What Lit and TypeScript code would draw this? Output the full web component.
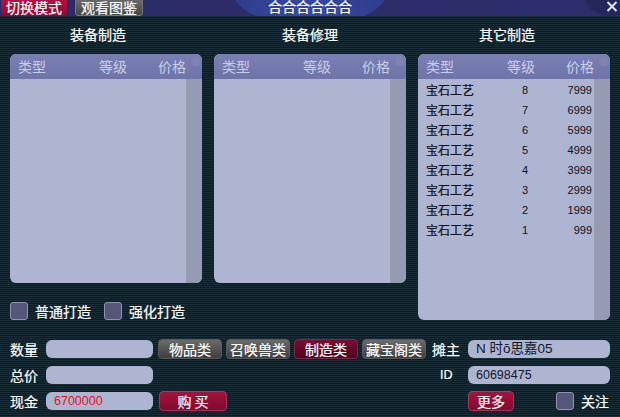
import { LitElement, html, css } from "lit";
import { customElement } from "lit/decorators.js";

const ROWS: [string, string][] = [
  ["8", "7999"], ["7", "6999"], ["6", "5999"], ["5", "4999"],
  ["4", "3999"], ["3", "2999"], ["2", "1999"], ["1", "999"],
];

@customElement("app-root")
export class AppRoot extends LitElement {
  static styles = css`
    :host {
      display: block;
      width: 620px;
      height: 417px;
      overflow: hidden;
      position: relative;
      font-family: "Noto Sans CJK SC", "Liberation Sans", sans-serif;
      color: #fff;
      background: repeating-linear-gradient(180deg, #1a2d36 0 1px, #0e1c22 1px 2px);
    }
    .top { height: 16px; background: linear-gradient(90deg, #2a2b66, #2d2f6c); display: flex; position: relative; overflow: hidden; }
    .topbtn {
      box-sizing: border-box; height: 16px; border-radius: 0 0 4px 4px;
      font-size: 14px; line-height: 15px; text-align: center; width: 66px; margin-left: 1px;
      -webkit-text-stroke: 0.2px #fff;
    }
    .crimson { background: linear-gradient(180deg, #b5103f, #8c0a35); }
    .gray { background: linear-gradient(180deg, #6a6a6a, #454545); width: 68px; margin-left: 8px; border: 1px solid #77777a; border-top: 0; line-height: 15px; }
    .blob {
      position: absolute; left: 232px; top: -46px; width: 156px; height: 72px;
      border-radius: 50%; background: radial-gradient(ellipse at 50% 100%, #3a4ba0, #2c3a86 85%);
      font-size: 14px; text-align: center;
    }
    .blob span { position: absolute; left: 0; right: 0; top: 46px; line-height: 13px; -webkit-text-stroke: 0.2px #fff; }
    .corner { position: absolute; left: 586px; top: -16px; width: 50px; height: 32px; border-radius: 50%; background: radial-gradient(ellipse at 50% 50%, #23275a 60%, #2d2f6c 100%); }
    .close { position: absolute; left: 605px; top: 0; width: 14px; height: 14px; }

    .main { display: grid; grid-template-columns: 192px 192px 192px; column-gap: 12px; padding: 9px 0 0 10px; }
    .col { display: flex; flex-direction: column; }
    .title { box-sizing: border-box; height: 18px; line-height: 18px; margin-bottom: 11px; font-size: 14px; text-align: center; -webkit-text-stroke: 0.2px #fff; }
    .t1 { padding-right: 16px; }
    .t3 { padding-right: 14px; }
    .panel { position: relative; width: 192px; border-radius: 6px; overflow: hidden; background: #adb5d0; display: flex; flex-direction: column; }
    .short { height: 229px; }
    .tall { height: 266px; }
    .head {
      height: 25px; flex: none; background: linear-gradient(180deg, #7b80b4, #6f74a8); color: #c9cdea; font-size: 14px; position: relative; z-index: 1;
      display: grid; grid-template-columns: 81px 59px 1fr; padding-left: 8px; line-height: 25px; box-sizing: border-box;
    }
    .bar { position: absolute; right: 0; top: 25px; bottom: 0; width: 16px; background: #959bb2; }
    .knob { position: absolute; right: 1px; top: 2px; width: 10px; height: 10px; border-radius: 50%; background: #7f83ad; z-index: 2; }
    .body { padding: 1px 0 0 8px; color: #0e1020; position: relative; z-index: 1; }
    .row { display: grid; grid-template-columns: 83px 32px 51px; height: 20px; line-height: 20px; font-size: 12px; }
    .row .lvl { text-align: center; font-family: "Liberation Sans", sans-serif; font-size: 11px; }
    .row .price { text-align: right; font-family: "Liberation Sans", sans-serif; font-size: 11px; }
    .row .name { font-size: 12px; -webkit-text-stroke: 0.2px #0e1020; }

    .checks { display: flex; align-items: center; margin-top: 19px; height: 18px; font-size: 14px; grid-column: 1 / span 2; }
    .box { width: 18px; height: 18px; box-sizing: border-box; border: 1px solid #8f93ad; border-radius: 3px; background: #56557a; flex: none; }
    .checks .lbl { margin-left: 7px; width: 69px; -webkit-text-stroke: 0.2px #fff; }
    .left2 { grid-column: 1 / span 2; display: grid; grid-template-columns: 192px 192px; column-gap: 12px; }

    .bottom {
      position: absolute; left: 10px; top: 339px; width: 600px;
      display: grid; grid-template-columns: 36px 107px 5px 64px 4px 64px 4px 64px 4px 64px 6px 36px 142px;
      grid-template-rows: 20px 6px 20px 6px 20px; align-items: center; font-size: 14px;
    }
    .lab { line-height: 20px; -webkit-text-stroke: 0.2px #fff; }
    .inp { box-sizing: border-box; height: 18px; background: #adb5d0; border-radius: 6px; font-size: 12.5px; line-height: 18px; padding-left: 8px; color: #12162e; font-family: "Liberation Sans", "Noto Sans CJK SC", sans-serif; white-space: nowrap; }
    .owner { font-size: 13.5px; }
    .red { color: #e3102c; }
    .btn { height: 20px; box-sizing: border-box; border-radius: 4px; line-height: 18px; text-align: center; font-size: 14px; border: 1px solid #5a5a5a; background: linear-gradient(180deg, #6b6b6b, #3e3e3e); -webkit-text-stroke: 0.2px #fff; }
    .btn.on { background: linear-gradient(180deg, #7c0b33, #4e0620); border-color: #7a2a48; }
    .btn.buy { background: linear-gradient(180deg, #a6123f, #7e0b30); border-color: #a03a58; width: 68px; margin-left: 1px; }
    .r1 { grid-row: 1; } .r2 { grid-row: 3; } .r3 { grid-row: 5; }
    .extra { grid-column: 13; display: flex; align-items: center; }
    .more { width: 46px; background: linear-gradient(180deg, #a6123f, #7e0b30); border-color: #a03a58; }
    .extra .box { margin-left: 42px; }
    .extra .t { margin-left: 7px; -webkit-text-stroke: 0.2px #fff; }
    .idlab { padding-left: 8px; font-family: "Liberation Sans", sans-serif; font-size: 12.5px; }
    .c1 { grid-column: 1; } .c2 { grid-column: 2; } .c4 { grid-column: 4; } .c6 { grid-column: 6; }
    .c8 { grid-column: 8; } .c10 { grid-column: 10; } .c12 { grid-column: 12; } .c13 { grid-column: 13; }
    .c4s { grid-column: 4 / span 3; }
  `;

  private panel(title: string, titleCls: string, cls: string, rows: [string, string][] = []) {
    return html`<div class="col">
      <div class="title ${titleCls}">${title}</div>
      <div class="panel ${cls}">
        <div class="head"><span>类型</span><span>等级</span><span>价格</span></div>
        <div class="bar"></div>
        <div class="knob"></div>
        <div class="body">
          ${rows.map(
            ([l, p]) => html`<div class="row"><span class="name">宝石工艺</span><span class="lvl">${l}</span><span class="price">${p}</span></div>`
          )}
        </div>
      </div>
    </div>`;
  }

  render() {
    return html`
      <div class="top">
        <div class="topbtn crimson">切换模式</div>
        <div class="topbtn gray">观看图鉴</div>
        <div class="blob"><span>合合合合合合</span></div>
        <div class="corner"></div>
        <svg class="close" viewBox="0 0 14 14"><path d="M2.5 2 L11.5 11 M11.5 2 L2.5 11" stroke="#dfe4ff" stroke-width="2" fill="none"/></svg>
      </div>
      <div class="main">
        <div class="left2">
          ${this.panel("装备制造", "t1", "short")}
          ${this.panel("装备修理", "", "short")}
          <div class="checks">
            <div class="box"></div><span class="lbl">普通打造</span>
            <div class="box"></div><span class="lbl">强化打造</span>
          </div>
        </div>
        ${this.panel("其它制造", "t3", "tall", ROWS)}
      </div>
      <div class="bottom">
        <div class="lab r1 c1">数量</div>
        <div class="inp r1 c2"></div>
        <div class="btn r1 c4">物品类</div>
        <div class="btn r1 c6">召唤兽类</div>
        <div class="btn on r1 c8">制造类</div>
        <div class="btn r1 c10">藏宝阁类</div>
        <div class="lab r1 c12">摊主</div>
        <div class="inp owner r1 c13">N 时ŏ思嘉05</div>

        <div class="lab r2 c1">总价</div>
        <div class="inp r2 c2"></div>
        <div class="lab idlab r2 c12">ID</div>
        <div class="inp r2 c13">60698475</div>

        <div class="lab r3 c1">现金</div>
        <div class="inp red r3 c2">6700000</div>
        <div class="btn buy r3 c4s">购 买</div>
        <div class="extra r3">
          <div class="btn more">更多</div>
          <div class="box"></div>
          <span class="t">关注</span>
        </div>
      </div>
    `;
  }
}
